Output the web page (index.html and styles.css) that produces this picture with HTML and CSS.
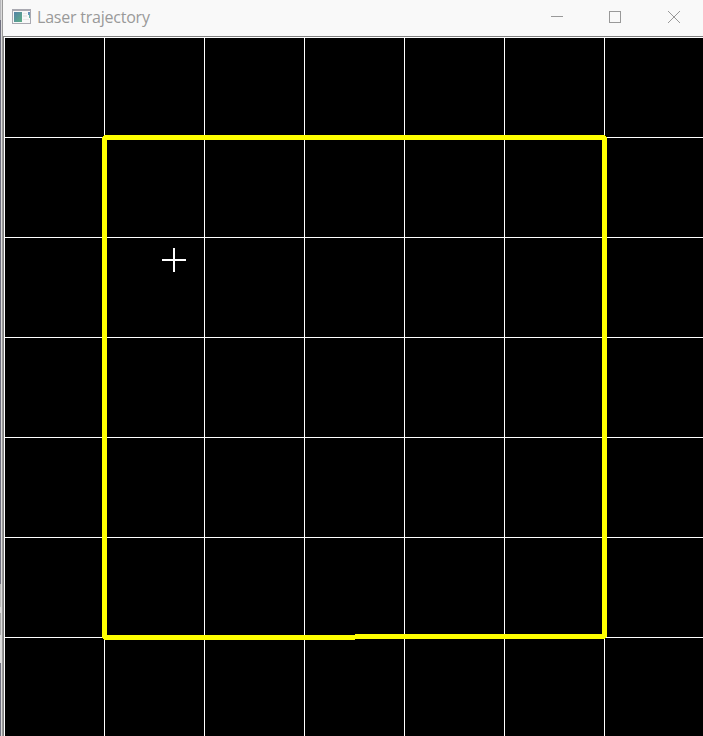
FILE: index.html
```html
<!DOCTYPE html>
<html lang="en">
<head>
<meta charset="utf-8">
<title>Laser trajectory</title>
<link rel="stylesheet" href="styles.css">
</head>
<body>
<div class="edge"></div>
<main class="window">
  <header class="titlebar">
    <svg class="app-icon" width="19" height="16" viewBox="0 0 19 16" shape-rendering="crispEdges">
      <defs>
        <linearGradient id="g" x1="0" y1="0" x2="1" y2="1"><stop offset="0" stop-color="#5482a8"/><stop offset="1" stop-color="#5caf85"/></linearGradient>
        <linearGradient id="h" x1="0" y1="0" x2="0" y2="1"><stop offset="0" stop-color="#6487c0"/><stop offset="1" stop-color="#6cb99a"/></linearGradient>
      </defs>
      <path fill="#a9a9b1" d="M0 0h19v15H0z"/>
      <path fill="#f8f8f8" d="M1 2h17v12H1z"/>
      <path fill="url(#g)" d="M2 3h8v10H2z"/>
      <path fill="#e8e8e8" d="M11 4h4v1h-4zM11 6h4v2h-4zM11 10h6v1h-6z"/>
      <path fill="url(#h)" d="M16 3h2v6h-1V6h-1z"/>
    </svg>
    <h1 class="title">Laser trajectory</h1>
    <div class="controls">
      <svg width="12" height="13" viewBox="0 0 12 13" shape-rendering="crispEdges"><path fill="#999" d="M0 5h12v1H0z"/></svg>
      <svg width="12" height="13" viewBox="0 0 12 13" shape-rendering="crispEdges"><path fill="none" stroke="#999" d="M.5.5h11v11H.5z"/></svg>
      <svg width="12" height="13" viewBox="0 0 12 13"><path fill="none" stroke="#999" d="M0 0l12 12M12 0L0 12"/></svg>
    </div>
  </header>
  <svg class="plot" width="699" height="699" viewBox="4 37 699 699" shape-rendering="crispEdges">
    <path fill="#000" d="M4 37h699v699H4z"/>
    <path class="grid" d="M4.5 37v699M104.5 37v699M204.5 37v699M304.5 37v699M404.5 37v699M504.5 37v699M604.5 37v699M4 37.5h699M4 137.5h699M4 237.5h699M4 337.5h699M4 437.5h699M4 537.5h699M4 637.5h699"/>
    <path class="laser" d="M104 135h501v1h1v1h1v500h-1v1h-1v1H355v1H104v-1h-1v-1h-1V137h1v-1h1zM107 140v495h248v-1h247V140z"/>
    <path fill="#fff" d="M173 248h2v24h-2zM162 259h24v2h-24z"/>
  </svg>
</main>
</body>
</html>
```
FILE: styles.css
```css
body {
  display: flex;
  width: 703px;
  height: 736px;
  margin: 0;
  overflow: hidden;
  background: #f9f9f9;
}
.edge {
  flex: none;
  width: 2px;
  background: linear-gradient(to right, transparent 1px, #dcdcdc 1px),
    linear-gradient(#b8b8bc 20px, #70707f 20px 584px, #bbb 584px 607px, #ddd 607px 613px, #aaa 613px 635px, #ddd 635px 663px, #70707f 663px);
}
.window {
  flex: 1;
  box-sizing: border-box;
  border-left: 1px solid #999;
}
.titlebar {
  display: flex;
  align-items: center;
  box-sizing: border-box;
  height: 37px;
  padding-left: 9px;
  background: #f9f9f9;
  border-bottom: 1px solid #808080;
}
.app-icon {
  margin-top: -3px;
}
.title {
  margin: -2px 0 0 6px;
  font: 400 16px/20px "Open Sans", sans-serif;
  letter-spacing: -0.22px;
  color: #999;
  white-space: nowrap;
}
.controls {
  display: grid;
  grid-template-columns: 58px 59px 12px;
  margin-left: auto;
  margin-right: 23px;
}
.controls svg,
.plot {
  display: block;
}
.controls svg {
  margin-top: -1px;
}
.plot {
  border-left: 1px solid #808080;
}
.grid {
  fill: none;
  stroke: #fff;
}
.laser {
  fill: #ff0;
  fill-rule: evenodd;
}
```
